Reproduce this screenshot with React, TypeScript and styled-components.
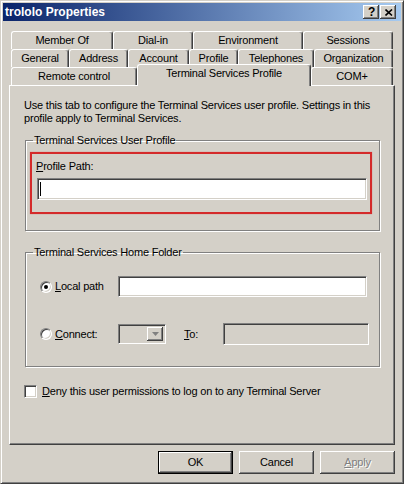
import React from 'react';
import styled, { createGlobalStyle, css } from 'styled-components';

const Global = createGlobalStyle`
  html, body { margin: 0; padding: 0; background: #d4d0c8; }
  body { font-family: "Liberation Sans", Arial, sans-serif; font-size: 11px; letter-spacing: -0.2px; color: #000; line-height: 13px; }
  * { box-sizing: border-box; }
`;

const raised = css`
  box-shadow: inset -1px -1px 0 #404040, inset 1px 1px 0 #fff, inset -2px -2px 0 #808080, inset 2px 2px 0 #d4d0c8;
`;
const sunken = css`
  border: 1px solid;
  border-color: #808080 #fff #fff #808080;
  box-shadow: inset 1px 1px 0 #404040, inset -1px -1px 0 #d4d0c8;
`;

const Window = styled.div`
  width: 404px;
  height: 484px;
  background: #d4d0c8;
  border: 1px solid;
  border-color: #d4d0c8 #404040 #404040 #d4d0c8;
  box-shadow: inset 1px 1px 0 #fff, inset -1px -1px 0 #808080;
  padding: 2px;
  display: flex;
  flex-direction: column;
`;

const TitleBar = styled.div`
  height: 18px;
  flex: none;
  display: flex;
  align-items: center;
  justify-content: space-between;
  padding: 0 5px 0 2px;
  background: linear-gradient(to right, #0a246a, #a6caf0);
`;

const Title = styled.span`
  color: #fff;
  font-weight: bold;
  font-size: 12px;
  letter-spacing: 0;
`;

const TitleButtons = styled.div`
  display: flex;
  gap: 1px;
`;

const TitleButton = styled.div`
  width: 16px;
  height: 14px;
  background: #d4d0c8;
  ${raised};
  display: flex;
  align-items: center;
  justify-content: center;
  font-weight: bold;
  font-size: 12px;
  line-height: 12px;
  padding-left: 1px;
`;

const Client = styled.div`
  flex: 1;
  display: flex;
  flex-direction: column;
  padding: 10px 6px 0 6px;
`;

const TabStrip = styled.div`
  display: flex;
  flex-direction: column;
  padding: 0 2px;
`;

const TabRow = styled.div`
  display: flex;
  height: 18px;
`;

const Tab = styled.div<{ $w: number; $selected?: boolean }>`
  width: ${p => p.$w}px;
  height: 18px;
  flex: none;
  display: flex;
  justify-content: center;
  align-items: flex-start;
  padding-top: 2px;
  background: #d4d0c8;
  border-top: 1px solid #fff;
  border-left: 1px solid #fff;
  border-right: 1px solid #404040;
  box-shadow: inset -1px 0 0 #808080;
  border-radius: 3px 3px 0 0;
  white-space: nowrap;
  ${p => p.$selected && css`
    height: 22px;
    margin-top: -3px;
    position: relative;
    z-index: 1;
  `}
`;

const Panel = styled.div`
  width: 386px;
  height: 360px;
  flex: none;
  border: 1px solid;
  border-color: #fff #404040 #404040 #fff;
  box-shadow: inset -1px -1px 0 #808080;
  padding: 13px 14px 0 14px;
  display: flex;
  flex-direction: column;
`;

const Description = styled.div`
  white-space: nowrap;
`;

const GroupBox = styled.fieldset<{ $top: number; $pb: number }>`
  margin: ${p => p.$top}px 0 0 1px;
  padding: 0 0 ${p => p.$pb}px 0;
  width: 355px;
  min-inline-size: 0;
  border: 1px solid #808080;
  box-shadow: inset 1px 1px 0 #fff, 1px 1px 0 #fff;
`;

const Legend = styled.legend`
  margin-left: 7px;
  padding: 0 1px;
  line-height: 13px;
`;

const Highlight = styled.div`
  margin: 5px 0 0 4px;
  width: 342px;
  border: 2px solid #d42a2a;
  box-shadow: 0 0 1px rgba(220, 60, 60, 0.6);
  padding: 6px 0 12px 4px;
  display: flex;
  flex-direction: column;
`;

const FieldLabel = styled.div`
  line-height: 13px;
`;

const TextField = styled.div<{ $w: number; $h: number; $disabled?: boolean }>`
  width: ${p => p.$w}px;
  height: ${p => p.$h}px;
  flex: none;
  background: ${p => (p.$disabled ? '#d4d0c8' : '#fff')};
  ${sunken};
  display: flex;
  align-items: center;
  padding-left: 2px;
`;

const Caret = styled.span`
  width: 1px;
  height: 14px;
  background: #000;
`;

const ProfileField = styled(TextField)`
  margin: 5px 0 0 1px;
`;

const OptionRows = styled.div`
  display: flex;
  flex-direction: column;
  padding: 17px 0 0 14px;
  gap: 26px;
`;

const OptionRow = styled.div`
  display: flex;
  align-items: center;
`;

const RadioLabel = styled.label`
  width: 78px;
  flex: none;
  display: flex;
  align-items: center;
  gap: 3px;
`;

const Radio = styled.span<{ $checked?: boolean }>`
  width: 12px;
  height: 12px;
  flex: none;
  border-radius: 50%;
  border: 1px solid;
  border-color: #808080 #fff #fff #808080;
  box-shadow: inset 1px 1px 0 #404040, inset -1px -1px 0 #d4d0c8;
  background: #fff;
  display: flex;
  align-items: center;
  justify-content: center;
  &::after {
    content: '';
    width: 4px;
    height: 4px;
    border-radius: 50%;
    background: ${p => (p.$checked ? '#000' : 'transparent')};
  }
`;

const Combo = styled.div`
  width: 48px;
  height: 20px;
  flex: none;
  background: #d4d0c8;
  ${sunken};
  display: flex;
  justify-content: flex-end;
  padding: 2px;
`;

const ComboButton = styled.div`
  width: 16px;
  height: 100%;
  background: #d4d0c8;
  ${raised};
  display: flex;
  align-items: center;
  justify-content: center;
`;

const ToLabel = styled.span`
  margin: 0 0 0 18px;
  width: 39px;
  flex: none;
`;

const CheckRow = styled.label`
  margin-top: 18px;
  display: flex;
  align-items: center;
  gap: 5px;
`;

const CheckBox = styled.span`
  width: 13px;
  height: 13px;
  flex: none;
  background: #fff;
  ${sunken};
`;

const ButtonRow = styled.div`
  display: flex;
  justify-content: flex-end;
  gap: 6px;
  margin-top: 6px;
`;

const Button = styled.div<{ $default?: boolean; $disabled?: boolean }>`
  width: 75px;
  height: 23px;
  display: flex;
  align-items: center;
  justify-content: center;
  background: #d4d0c8;
  ${raised};
  ${p => p.$default && css`
    border: 1px solid #000;
    box-shadow: inset -1px -1px 0 #404040, inset 1px 1px 0 #fff, inset -2px -2px 0 #808080;
  `}
  ${p => p.$disabled && css`
    color: #808080;
    text-shadow: 1px 1px 0 #fff;
  `}
`;

const tabRows: { label: string; w: number; selected?: boolean }[][] = [
  [
    { label: 'Member Of', w: 102 },
    { label: 'Dial-in', w: 80 },
    { label: 'Environment', w: 110 },
    { label: 'Sessions', w: 90 },
  ],
  [
    { label: 'General', w: 58 },
    { label: 'Address', w: 59 },
    { label: 'Account', w: 61 },
    { label: 'Profile', w: 49 },
    { label: 'Telephones', w: 76 },
    { label: 'Organization', w: 79 },
  ],
  [
    { label: 'Remote control', w: 126 },
    { label: 'Terminal Services Profile', w: 174, selected: true },
    { label: 'COM+', w: 82 },
  ],
];

export default function App() {
  return (
    <>
      <Global />
      <Window>
        <TitleBar>
          <Title>trololo Properties</Title>
          <TitleButtons>
            <TitleButton>?</TitleButton>
            <TitleButton>
              <svg width="8" height="7" viewBox="0 0 8 7">
                <path d="M0.5 0.5 L7 6.5 M7 0.5 L0.5 6.5" stroke="#000" strokeWidth="1.6" />
              </svg>
            </TitleButton>
          </TitleButtons>
        </TitleBar>
        <Client>
          <TabStrip>
            {tabRows.map((row, i) => (
              <TabRow key={i}>
                {row.map(t => (
                  <Tab key={t.label} $w={t.w} $selected={t.selected}>
                    {t.label}
                  </Tab>
                ))}
              </TabRow>
            ))}
          </TabStrip>
          <Panel>
            <Description>
              Use this tab to configure the Terminal Services user profile. Settings in this
              <br />
              profile apply to Terminal Services.
            </Description>
            <GroupBox $top={9} $pb={16}>
              <Legend>Terminal Services User Profile</Legend>
              <Highlight>
                <FieldLabel>
                  <u>P</u>rofile Path:
                </FieldLabel>
                <ProfileField $w={330} $h={22}>
                  <Caret />
                </ProfileField>
              </Highlight>
            </GroupBox>
            <GroupBox $top={15} $pb={21}>
              <Legend>Terminal Services Home Folder</Legend>
              <OptionRows>
                <OptionRow>
                  <RadioLabel>
                    <Radio $checked />
                    <span>
                      <u>L</u>ocal path
                    </span>
                  </RadioLabel>
                  <TextField $w={249} $h={21} />
                </OptionRow>
                <OptionRow>
                  <RadioLabel>
                    <Radio />
                    <span>
                      <u>C</u>onnect:
                    </span>
                  </RadioLabel>
                  <Combo>
                    <ComboButton>
                      <svg width="7" height="4" viewBox="0 0 7 4">
                        <path d="M0 0 H7 L3.5 4 Z" fill="#808080" />
                      </svg>
                    </ComboButton>
                  </Combo>
                  <ToLabel>
                    <u>T</u>o:
                  </ToLabel>
                  <TextField $w={146} $h={22} $disabled />
                </OptionRow>
              </OptionRows>
            </GroupBox>
            <CheckRow>
              <CheckBox />
              <span>
                <u>D</u>eny this user permissions to log on to any Terminal Server
              </span>
            </CheckRow>
          </Panel>
          <ButtonRow>
            <Button $default>OK</Button>
            <Button>Cancel</Button>
            <Button $disabled>
              <span>
                <u>A</u>pply
              </span>
            </Button>
          </ButtonRow>
        </Client>
      </Window>
    </>
  );
}
